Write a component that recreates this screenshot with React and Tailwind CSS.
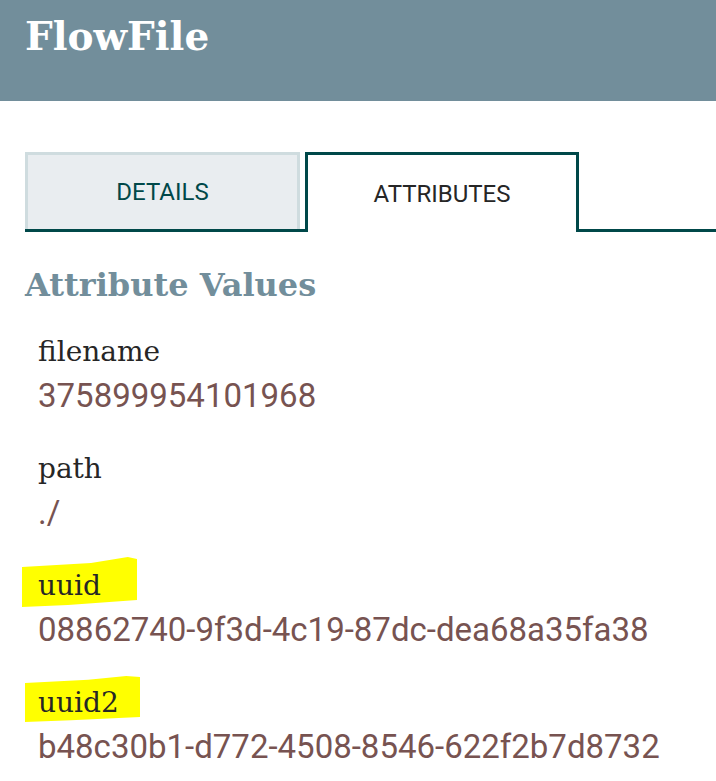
import React from 'react';

const slab = { fontFamily: '"DejaVu Serif", "Liberation Serif", serif' };

const attributes = [
  { name: 'filename', value: '375899954101968' },
  { name: 'path', value: './' },
  { name: 'uuid', value: '08862740-9f3d-4c19-87dc-dea68a35fa38', marked: 'a' },
  { name: 'uuid2', value: 'b48c30b1-d772-4508-8546-622f2b7d8732', marked: 'b' },
];

const Marker = ({ kind, children }) => (
  <span className="relative inline-block">
    <span
      className={`absolute bg-[#ffff00] ${
        kind === 'a'
          ? 'left-[-16px] top-[-7px] w-[115px] h-[50px] [clip-path:polygon(0_20%,60%_12%,92%_0,100%_4%,100%_86%,40%_96%,0_100%)]'
          : 'left-[-13px] top-[-5px] w-[115px] h-[46px] [clip-path:polygon(0_15%,55%_8%,88%_0,100%_2%,100%_89%,40%_96%,0_100%)]'
      }`}
    />
    <span className="relative">{children}</span>
  </span>
);

const App = () => {
  return (
    <div className="w-full min-h-screen bg-white overflow-hidden">
      <div className="h-[101px] bg-[#728e9b] pl-[25px] pt-[11px]">
        <h1
          className="text-white text-[39px] leading-[50px] font-bold"
          style={slab}
        >
          FlowFile
        </h1>
      </div>

      <div className="mt-[51px] ml-[25px] flex items-end border-b-[3px] border-[#004849] font-['Roboto',sans-serif]">
        <div className="w-[275px] h-[77px] bg-[#e9edf0] border-[3px] border-b-0 border-[#cfdcdf] flex items-center justify-center text-[24px] text-[#004849]">
          DETAILS
        </div>
        <div className="ml-[5px] -mb-[3px] w-[274px] h-[80px] bg-white border-[3px] border-b-0 border-[#004849] flex items-center justify-center text-[24px] text-[#262626]">
          ATTRIBUTES
        </div>
      </div>

      <div className="pl-[25px] pt-[31px]">
        <h2
          className="text-[#728e9b] text-[32px] leading-[44px] font-bold"
          style={slab}
        >
          Attribute Values
        </h2>
        <ul className="mt-[23px] pl-[13px]">
          {attributes.map((attr) => (
            <li key={attr.name} className="mb-[29px]">
              <div
                className="text-[28px] leading-[44px] text-[#262626] font-light"
                style={slab}
              >
                {attr.marked ? (
                  <Marker kind={attr.marked}>{attr.name}</Marker>
                ) : (
                  attr.name
                )}
              </div>
              <div className="text-[33px] leading-[44px] text-[#775351] font-['Roboto',sans-serif]">
                {attr.value}
              </div>
            </li>
          ))}
        </ul>
      </div>
    </div>
  );
};

export default App;
